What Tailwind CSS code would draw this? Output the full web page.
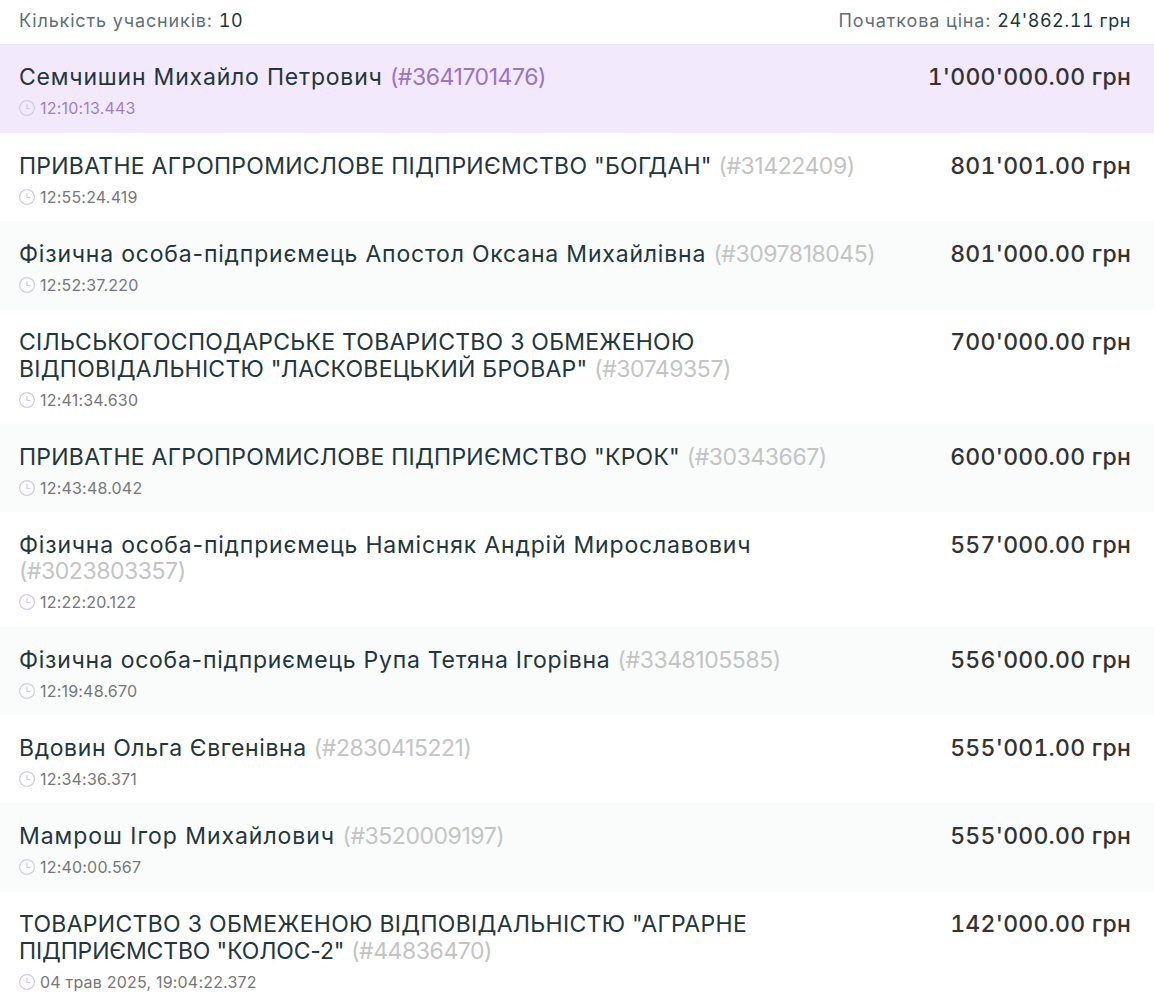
<!DOCTYPE html>
<html lang="uk">
<head>
    <meta charset="UTF-8">
    <meta name="viewport" content="width=device-width, initial-scale=1.0">
    <title>Учасники</title>
    <script src="https://cdn.jsdelivr.net/npm/@tailwindcss/browser@4"></script>
</head>
<body class="bg-white font-['Inter',sans-serif] overflow-hidden h-[1000px]">
    <!-- Summary -->
    <div class="flex justify-between items-center h-[45px] pb-[4px] pl-[19px] pr-[23px] border-b border-[#e8eaea] text-[18px] tracking-[0.85px] text-[#5f7175]">
        <p>Кількість учасників: <span class="tabular-nums tracking-[0.55px] text-[#22363c]">10</span></p>
        <p>Початкова ціна: <span class="tabular-nums tracking-[0.55px] text-[#22363c]">24'862.11 грн</span></p>
    </div>

    <!-- Bids -->
    <div>
        <div class="flex justify-between pt-[19px] pb-[13.8px] pl-[19px] pr-[23px] bg-[#f2e9fd]">
            <div class="w-[870px]">
                <p class="text-[23px] tracking-[0.8px] leading-[26.4px] text-[#22363c]">Семчишин Михайло Петрович <span class="tracking-[-0.45px] text-[#9b74c4]">(#3641701476)</span></p>
                <p class="flex items-center gap-[5px] mt-[7px] text-[16px] tracking-[0.2px] leading-[22px] text-[#a07fc8]"><svg class="w-4 h-4" viewBox="0 0 16 16" fill="none" stroke="#d4cce0" stroke-width="1.2"><circle cx="8" cy="8" r="7.4"/><path d="M8 4v4.500h3.500"/></svg>12:10:13.443</p>
            </div>
            <p class="text-[23px] tabular-nums tracking-[0.25px] leading-[26.4px] font-medium text-[#333]">1'000'000.00 грн</p>
        </div>

        <div class="flex justify-between pt-[19.6px] pb-[13.5px] pl-[19px] pr-[23px]">
            <div class="w-[870px]">
                <p class="text-[23px] tracking-[0.25px] leading-[26.4px] text-[#22363c]">ПРИВАТНЕ АГРОПРОМИСЛОВЕ ПІДПРИЄМСТВО "БОГДАН" <span class="tracking-[-0.45px] text-[#c4c4c4]">(#31422409)</span></p>
                <p class="flex items-center gap-[5px] mt-[6.7px] text-[16px] tracking-[0.2px] leading-[22px] text-[#777]"><svg class="w-4 h-4" viewBox="0 0 16 16" fill="none" stroke="#d4cce0" stroke-width="1.2"><circle cx="8" cy="8" r="7.4"/><path d="M8 4v4.500h3.500"/></svg>12:55:24.419</p>
            </div>
            <p class="text-[23px] tabular-nums tracking-[0.25px] leading-[26.4px] font-medium text-[#333]">801'001.00 грн</p>
        </div>

        <div class="flex justify-between pt-[19.6px] pb-[13.5px] pl-[19px] pr-[23px] bg-[#f9fcfb]">
            <div class="w-[870px]">
                <p class="text-[23px] tracking-[0.8px] leading-[26.4px] text-[#22363c]">Фізична особа-підприємець Апостол Оксана Михайлівна <span class="tracking-[-0.45px] text-[#c4c4c4]">(#3097818045)</span></p>
                <p class="flex items-center gap-[5px] mt-[6.7px] text-[16px] tracking-[0.2px] leading-[22px] text-[#777]"><svg class="w-4 h-4" viewBox="0 0 16 16" fill="none" stroke="#d4cce0" stroke-width="1.2"><circle cx="8" cy="8" r="7.4"/><path d="M8 4v4.500h3.500"/></svg>12:52:37.220</p>
            </div>
            <p class="text-[23px] tabular-nums tracking-[0.25px] leading-[26.4px] font-medium text-[#333]">801'000.00 грн</p>
        </div>

        <div class="flex justify-between pt-[19.6px] pb-[13.5px] pl-[19px] pr-[23px]">
            <div class="w-[870px]">
                <p class="text-[23px] tracking-[0.25px] leading-[26.4px] text-[#22363c]">СІЛЬСЬКОГОСПОДАРСЬКЕ ТОВАРИСТВО З ОБМЕЖЕНОЮ<br>ВІДПОВІДАЛЬНІСТЮ "ЛАСКОВЕЦЬКИЙ БРОВАР" <span class="tracking-[-0.45px] text-[#c4c4c4]">(#30749357)</span></p>
                <p class="flex items-center gap-[5px] mt-[6.7px] text-[16px] tracking-[0.2px] leading-[22px] text-[#777]"><svg class="w-4 h-4" viewBox="0 0 16 16" fill="none" stroke="#d4cce0" stroke-width="1.2"><circle cx="8" cy="8" r="7.4"/><path d="M8 4v4.500h3.500"/></svg>12:41:34.630</p>
            </div>
            <p class="text-[23px] tabular-nums tracking-[0.25px] leading-[26.4px] font-medium text-[#333]">700'000.00 грн</p>
        </div>

        <div class="flex justify-between pt-[19.6px] pb-[13.5px] pl-[19px] pr-[23px] bg-[#f9fcfb]">
            <div class="w-[870px]">
                <p class="text-[23px] tracking-[0.25px] leading-[26.4px] text-[#22363c]">ПРИВАТНЕ АГРОПРОМИСЛОВЕ ПІДПРИЄМСТВО "КРОК" <span class="tracking-[-0.45px] text-[#c4c4c4]">(#30343667)</span></p>
                <p class="flex items-center gap-[5px] mt-[6.7px] text-[16px] tracking-[0.2px] leading-[22px] text-[#777]"><svg class="w-4 h-4" viewBox="0 0 16 16" fill="none" stroke="#d4cce0" stroke-width="1.2"><circle cx="8" cy="8" r="7.4"/><path d="M8 4v4.500h3.500"/></svg>12:43:48.042</p>
            </div>
            <p class="text-[23px] tabular-nums tracking-[0.25px] leading-[26.4px] font-medium text-[#333]">600'000.00 грн</p>
        </div>

        <div class="flex justify-between pt-[19.6px] pb-[13.5px] pl-[19px] pr-[23px]">
            <div class="w-[870px]">
                <p class="text-[23px] tracking-[0.8px] leading-[26.4px] text-[#22363c]">Фізична особа-підприємець Намісняк Андрій Мирославович<br><span class="tracking-[-0.45px] text-[#c4c4c4]">(#3023803357)</span></p>
                <p class="flex items-center gap-[5px] mt-[6.7px] text-[16px] tracking-[0.2px] leading-[22px] text-[#777]"><svg class="w-4 h-4" viewBox="0 0 16 16" fill="none" stroke="#d4cce0" stroke-width="1.2"><circle cx="8" cy="8" r="7.4"/><path d="M8 4v4.500h3.500"/></svg>12:22:20.122</p>
            </div>
            <p class="text-[23px] tabular-nums tracking-[0.25px] leading-[26.4px] font-medium text-[#333]">557'000.00 грн</p>
        </div>

        <div class="flex justify-between pt-[19.6px] pb-[13.5px] pl-[19px] pr-[23px] bg-[#f9fcfb]">
            <div class="w-[870px]">
                <p class="text-[23px] tracking-[0.73px] leading-[26.4px] text-[#22363c]">Фізична особа-підприємець Рупа Тетяна Ігорівна <span class="tracking-[-0.45px] text-[#c4c4c4]">(#3348105585)</span></p>
                <p class="flex items-center gap-[5px] mt-[6.7px] text-[16px] tracking-[0.2px] leading-[22px] text-[#777]"><svg class="w-4 h-4" viewBox="0 0 16 16" fill="none" stroke="#d4cce0" stroke-width="1.2"><circle cx="8" cy="8" r="7.4"/><path d="M8 4v4.500h3.500"/></svg>12:19:48.670</p>
            </div>
            <p class="text-[23px] tabular-nums tracking-[0.25px] leading-[26.4px] font-medium text-[#333]">556'000.00 грн</p>
        </div>

        <div class="flex justify-between pt-[19.6px] pb-[13.5px] pl-[19px] pr-[23px]">
            <div class="w-[870px]">
                <p class="text-[23px] tracking-[0.6px] leading-[26.4px] text-[#22363c]">Вдовин Ольга Євгенівна <span class="tracking-[-0.45px] text-[#c4c4c4]">(#2830415221)</span></p>
                <p class="flex items-center gap-[5px] mt-[6.7px] text-[16px] tracking-[0.2px] leading-[22px] text-[#777]"><svg class="w-4 h-4" viewBox="0 0 16 16" fill="none" stroke="#d4cce0" stroke-width="1.2"><circle cx="8" cy="8" r="7.4"/><path d="M8 4v4.500h3.500"/></svg>12:34:36.371</p>
            </div>
            <p class="text-[23px] tabular-nums tracking-[0.25px] leading-[26.4px] font-medium text-[#333]">555'001.00 грн</p>
        </div>

        <div class="flex justify-between pt-[19.6px] pb-[13.5px] pl-[19px] pr-[23px] bg-[#f9fcfb]">
            <div class="w-[870px]">
                <p class="text-[23px] tracking-[0.95px] leading-[26.4px] text-[#22363c]">Мамрош Ігор Михайлович <span class="tracking-[-0.45px] text-[#c4c4c4]">(#3520009197)</span></p>
                <p class="flex items-center gap-[5px] mt-[6.7px] text-[16px] tracking-[0.2px] leading-[22px] text-[#777]"><svg class="w-4 h-4" viewBox="0 0 16 16" fill="none" stroke="#d4cce0" stroke-width="1.2"><circle cx="8" cy="8" r="7.4"/><path d="M8 4v4.500h3.500"/></svg>12:40:00.567</p>
            </div>
            <p class="text-[23px] tabular-nums tracking-[0.25px] leading-[26.4px] font-medium text-[#333]">555'000.00 грн</p>
        </div>

        <div class="flex justify-between pt-[19.6px] pb-[13.5px] pl-[19px] pr-[23px]">
            <div class="w-[870px]">
                <p class="text-[23px] tracking-[0.3px] leading-[26.4px] text-[#22363c]">ТОВАРИСТВО З ОБМЕЖЕНОЮ ВІДПОВІДАЛЬНІСТЮ "АГРАРНЕ<br><span class="tracking-[-0.15px]">ПІДПРИЄМСТВО "КОЛОС-2"</span> <span class="tracking-[-0.45px] text-[#c4c4c4]">(#44836470)</span></p>
                <p class="flex items-center gap-[5px] mt-[6.7px] text-[16px] tracking-[0.2px] leading-[22px] text-[#777]"><svg class="w-4 h-4" viewBox="0 0 16 16" fill="none" stroke="#d4cce0" stroke-width="1.2"><circle cx="8" cy="8" r="7.4"/><path d="M8 4v4.500h3.500"/></svg>04 трав 2025, 19:04:22.372</p>
            </div>
            <p class="text-[23px] tabular-nums tracking-[0.25px] leading-[26.4px] font-medium text-[#333]">142'000.00 грн</p>
        </div>
    </div>
</body>
</html>
